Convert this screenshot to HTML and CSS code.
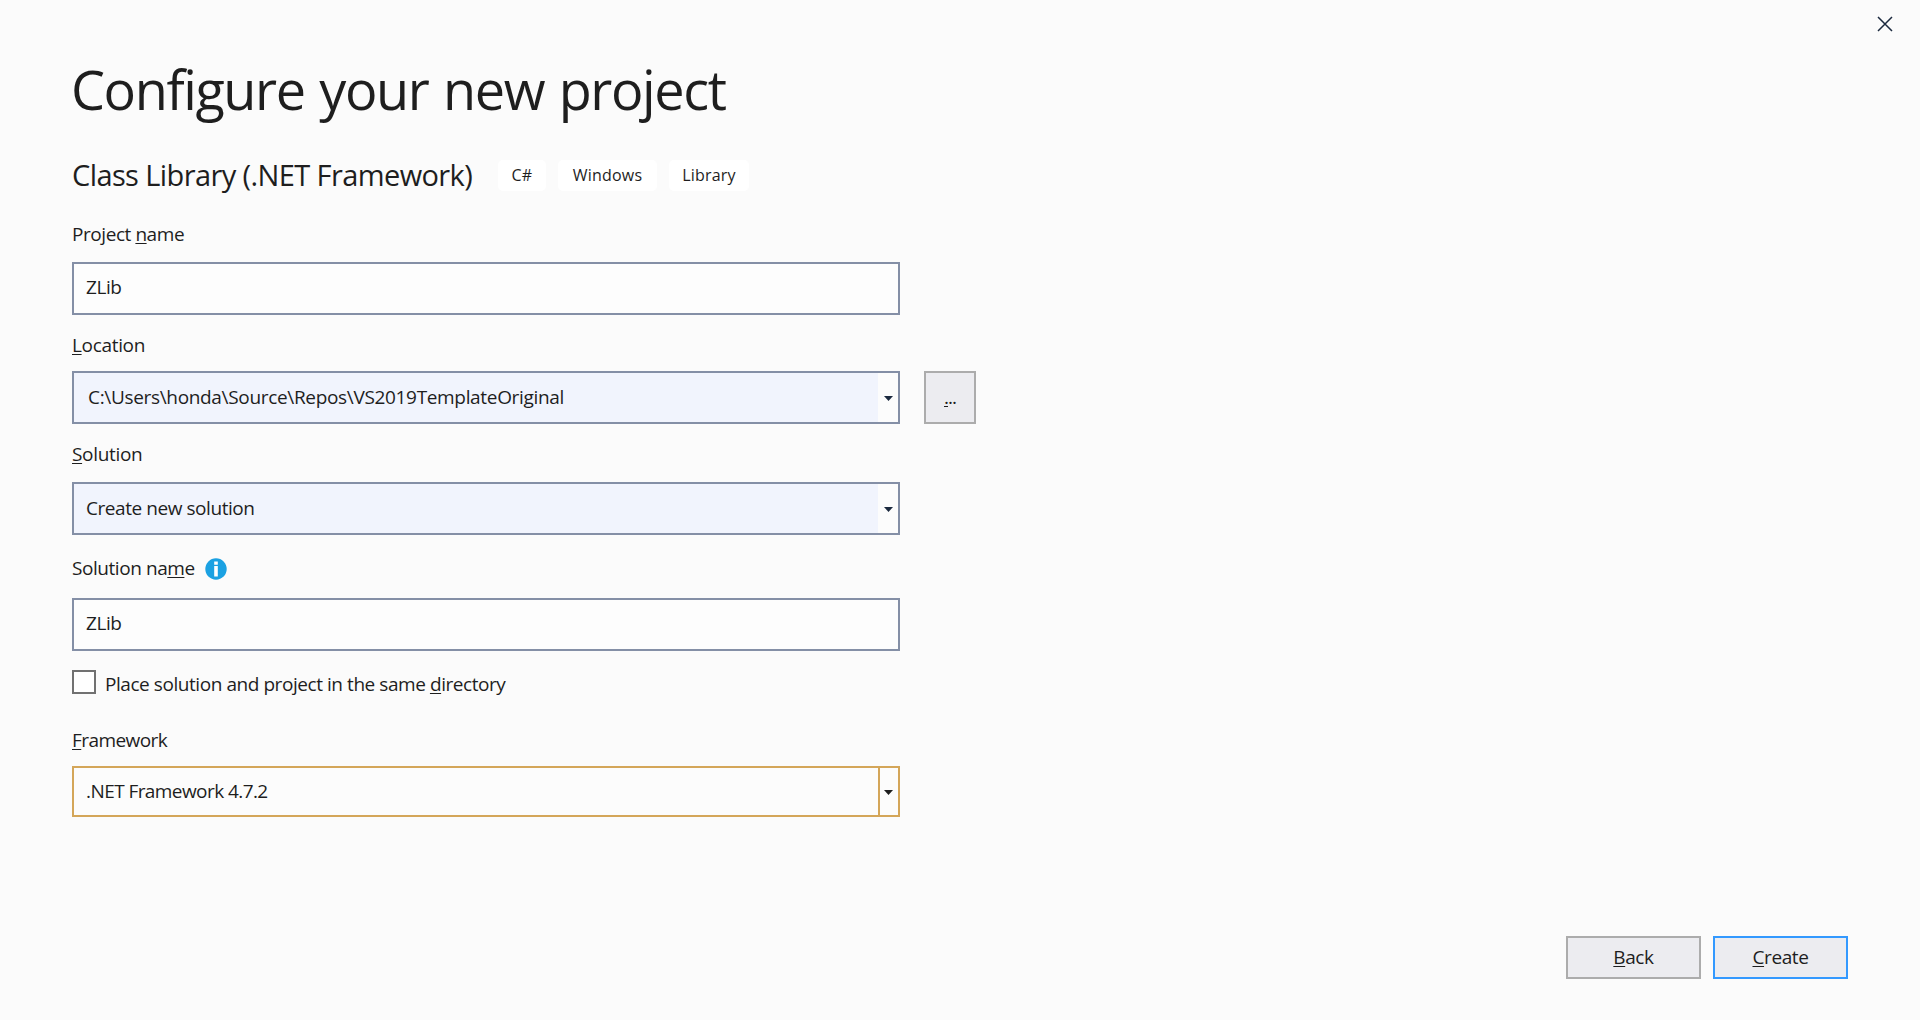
FILE: index.html
```
<!DOCTYPE html>
<html lang="en">
<head>
<meta charset="utf-8">
<title>Configure your new project</title>
<link rel="stylesheet" href="styles.css">
</head>
<body>
<main class="dialog">
  <button class="close" aria-label="Close"><svg width="16" height="16" viewBox="0 0 16 16"><path d="M1 1L15 15M15 1L1 15"/></svg></button>
  <h1 class="title">Configure your new project</h1>
  <div class="template">
    <h2 class="template-name">Class Library (.NET Framework)</h2>
    <ul class="tags"><li class="tag tag-lang">C#</li><li class="tag tag-os">Windows</li><li class="tag tag-type">Library</li></ul>
  </div>
  <form class="form">
    <section class="field">
      <div class="label"><span>Project <u>n</u>ame</span></div>
      <div class="box"><span class="value">ZLib</span></div>
    </section>
    <section class="field location">
      <div class="label"><span><u>L</u>ocation</span></div>
      <div class="row">
        <div class="box combo"><span class="value path">C:\Users\honda\Source\Repos\VS2019TemplateOriginal</span><span class="drop"><svg width="9" height="5" viewBox="0 0 9 5"><path d="M0 0H9L4.5 5Z"/></svg></span></div>
        <button type="button" class="button browse"><u>.</u>..</button>
      </div>
    </section>
    <section class="field solution">
      <div class="label"><span><u>S</u>olution</span></div>
      <div class="box combo"><span class="value">Create new solution</span><span class="drop"><svg width="9" height="5" viewBox="0 0 9 5"><path d="M0 0H9L4.5 5Z"/></svg></span></div>
    </section>
    <section class="field solution-name">
      <div class="label"><span>Solution na<u>m</u>e</span><svg class="info" width="22" height="22" viewBox="0 0 22 22"><circle cx="11" cy="11" r="10.7"/><path d="M9.2 3.5h3.6v3.2H9.2zM9.2 8h3.6v10.5H9.2z"/></svg></div>
      <div class="box"><span class="value">ZLib</span></div>
    </section>
    <div class="check"><span class="checkbox"></span><span class="check-text">Place solution and project in the same <u>d</u>irectory</span></div>
    <section class="field framework">
      <div class="label"><span><u>F</u>ramework</span></div>
      <div class="box combo focus"><span class="value net">.NET Framework 4.7.2</span><span class="drop"><svg width="9" height="5" viewBox="0 0 9 5"><path d="M0 0H9L4.5 5Z"/></svg></span></div>
    </section>
  </form>
  <footer class="actions">
    <button class="button"><u>B</u>ack</button>
    <button class="button primary"><u>C</u>reate</button>
  </footer>
</main>
</body>
</html>
```
FILE: styles.css
```
* { box-sizing: border-box; }
body { margin: 0; background: #fbfbfb; color: #1e1e1e; font: 19px/26px "Open Sans", "Noto Sans", sans-serif; letter-spacing: -0.44px; }
h1, h2, ul { margin: 0; padding: 0; font-weight: 400; list-style: none; }
u { text-underline-offset: 2px; text-decoration-thickness: 1px; text-decoration-skip-ink: none; }
.dialog { position: relative; display: flex; flex-direction: column; width: 1920px; height: 1020px; padding: 54px 72px 41px; white-space: nowrap; }
.close { position: absolute; top: 16px; right: 27px; width: 16px; height: 16px; padding: 0; border: 0; background: none; }
.close svg { display: block; stroke: #1b293e; stroke-width: 1.5; }
.title { height: 70px; margin-left: -1px; font-size: 54px; line-height: 70px; letter-spacing: -1.4px; word-spacing: 2px; }
.template { display: flex; gap: 26px; height: 42px; margin-top: 30px; }
.template-name { width: 400px; font-size: 29px; line-height: 42px; letter-spacing: -0.6px; }
.tags { display: flex; gap: 12px; padding-top: 6px; letter-spacing: 0.2px; }
.tag { height: 31px; border-radius: 5px; background: #fff; font-size: 16px; line-height: 31px; text-align: center; }
.tag-lang { width: 48px; }
.tag-os { width: 99px; }
.tag-type { width: 80px; }
.form { margin-top: 25px; }
.label { display: flex; height: 26px; }
.box { display: flex; align-items: center; width: 828px; height: 53px; margin-top: 15px; padding-left: 12px; border: 2px solid #848fa6; background: #fdfdfd; }
.value { padding-bottom: 4px; }
.row { display: flex; gap: 24px; }
.combo { background: #f1f4fd; justify-content: space-between; }
.combo .value { padding-bottom: 2px; }
.drop { display: flex; align-items: center; justify-content: center; width: 20px; height: 100%; padding-top: 1px; background: #fcfcfc; }
.drop svg { fill: #1b293e; }
.location { margin-top: 17px; letter-spacing: -0.33px; }
.location .box { margin-top: 13px; }
.path { padding-left: 2px; }
.solution { margin-top: 17px; }
.solution .label { letter-spacing: -0.33px; }
.solution-name { margin-top: 20px; }
.solution-name .box { margin-top: 17px; }
.button { width: 135px; height: 43px; padding: 0 0 2px; border: 2px solid #acacac; background: #ececf0; color: #1e1e1e; font: inherit; letter-spacing: -0.4px; }
.primary { border-color: #3399ff; }
.browse { width: 52px; height: 53px; margin-top: 13px; letter-spacing: -1px; }
.info { margin: 3px 0 0 10px; }
.info circle { fill: #1ba1e2; }
.info path { fill: #fff; }
.check { display: flex; gap: 9px; height: 26px; margin-top: 19px; }
.checkbox { width: 24px; height: 24px; border: 2px solid #717171; background: #fff; }
.check-text { padding-top: 1px; }
.framework { margin-top: 31px; letter-spacing: -0.57px; }
.framework .box { height: 51px; margin-top: 13px; border-color: #d4a659; background: #fcfcfc; }
.framework .drop { padding-right: 2px; border-left: 2px solid #d4a659; }
.framework .drop svg { fill: #1e1e1e; }
.actions { display: flex; justify-content: flex-end; gap: 12px; margin-top: auto; }
```
